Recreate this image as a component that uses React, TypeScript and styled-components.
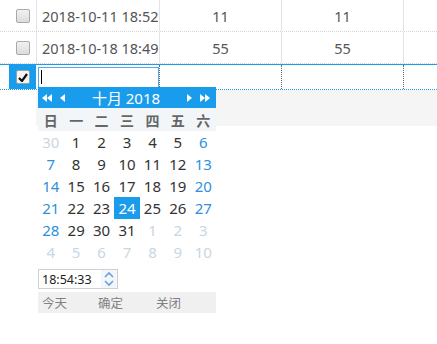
import React from "react";
import styled, { createGlobalStyle } from "styled-components";

const GlobalStyle = createGlobalStyle`
  html, body {
    margin: 0;
    padding: 0;
    background: #fff;
  }
  body {
    font-family: "Noto Sans", "Noto Sans CJK SC", sans-serif;
    color: #555;
  }
`;

const FONT = `"Noto Sans", "Noto Sans CJK SC", sans-serif`;
const BLUE = "#1a9cec";

const Page = styled.div`
  position: relative;
  width: 437px;
  height: 344px;
  overflow: hidden;
`;

const Row = styled.div<{ editing?: boolean }>`
  display: grid;
  grid-template-columns: 9px 27px 123px 122px 122px 1fr;
  height: ${({ editing }) => (editing ? "24px" : "31px")};
  border-top: ${({ editing }) => (editing ? `1px solid ${BLUE}` : "none")};
  border-bottom: ${({ editing }) =>
    editing ? `1px dotted ${BLUE}` : "1px dotted #d6d6d6"};
  font-size: 14.5px;
  color: #555;
`;

const Cell = styled.div<{ center?: boolean; editing?: boolean }>`
  display: flex;
  align-items: center;
  justify-content: ${({ center }) => (center ? "center" : "flex-start")};
  padding-left: ${({ center }) => (center ? "0" : "5px")};
  border-left: ${({ editing }) =>
    editing ? "1px dotted #5a6a7a" : "1px solid #e3e3e3"};
  white-space: nowrap;
  overflow: hidden;
  box-sizing: border-box;
`;

const EditCell = styled.div`
  display: flex;
  align-items: center;
  padding-left: 2px;
  box-sizing: border-box;
`;

const Gutter = styled.div``;

const CheckCell = styled.div<{ selected?: boolean }>`
  display: flex;
  align-items: center;
  justify-content: center;
  background: ${({ selected }) => (selected ? BLUE : "transparent")};
`;

const CheckBox = styled.span<{ checked?: boolean }>`
  width: 12px;
  height: 12px;
  border: 1px solid ${({ checked }) => (checked ? "#8aa" : "#a9a9a9")};
  border-radius: 2px;
  background: ${({ checked }) =>
    checked ? "#f4f4f4" : "linear-gradient(#f2f2f2, #dcdcdc)"};
  display: flex;
  align-items: center;
  justify-content: center;
`;

const EditInput = styled.div`
  width: 121px;
  height: 21px;
  border: 1px solid #5aa7e6;
  box-sizing: border-box;
  display: flex;
  align-items: center;
  padding-left: 2px;
`;

const Caret = styled.span`
  width: 1px;
  height: 14px;
  background: #000;
`;

const GrayBand = styled.div`
  margin-left: 36px;
  height: 36px;
  background: #f5f5f5;
`;

/* date picker popup */
const Picker = styled.div`
  position: absolute;
  left: 38px;
  top: 87px;
  width: 178px;
  background: #fff;
  font-family: ${FONT};
`;

const PickerHead = styled.div`
  height: 21px;
  background: ${BLUE};
  color: #fff;
  display: flex;
  align-items: center;
  justify-content: space-between;
  padding: 0 6px 0 4px;
  font-size: 15px;
`;

const NavGroup = styled.div`
  display: flex;
  align-items: center;
  gap: 8px;
`;

const WeekRow = styled.div`
  display: grid;
  grid-template-columns: repeat(7, 1fr);
  height: 23px;
  background: #f3f6f9;
  align-items: center;
  text-align: center;
  font-size: 14px;
  font-weight: bold;
  color: #666;
`;

const DayGrid = styled.div`
  display: grid;
  grid-template-columns: repeat(7, 1fr);
  grid-auto-rows: 22px;
`;

type Tone = "other" | "weekend" | "normal" | "active";

const Day = styled.div<{ tone: Tone }>`
  display: flex;
  align-items: center;
  justify-content: center;
  font-size: 15px;
  color: ${({ tone }) =>
    tone === "other"
      ? "#c9d6e3"
      : tone === "weekend"
      ? "#2f8fdc"
      : tone === "active"
      ? "#fff"
      : "#333"};
  background: ${({ tone }) => (tone === "active" ? BLUE : "transparent")};
`;

const TimeBox = styled.div`
  margin-top: 6px;
  width: 80px;
  height: 20px;
  border: 1px solid #d0d0d0;
  box-sizing: border-box;
  display: flex;
  align-items: center;
  justify-content: space-between;
  padding-left: 3px;
  font-size: 12.5px;
  color: #222;
`;

const Spinner = styled.div`
  width: 16px;
  height: 18px;
  background: #f3f6fa;
  display: flex;
  align-items: center;
  justify-content: center;
`;

const PickerFoot = styled.div`
  margin-top: 3px;
  height: 21px;
  background: #f0f0f0;
  display: grid;
  grid-template-columns: 56px 58px 1fr;
  align-items: center;
  padding-left: 4px;
  font-size: 12.5px;
  color: #808080;
`;

const NavArrow = ({ dir, double }: { dir: "l" | "r"; double?: boolean }) => {
  const tri = (x: number) =>
    dir === "l"
      ? `M${x + 5} 0 L${x} 4 L${x + 5} 8 Z`
      : `M${x} 0 L${x + 5} 4 L${x} 8 Z`;
  return (
    <svg width={double ? 10 : 5} height={8} viewBox={`0 0 ${double ? 10 : 5} 8`}>
      <path d={tri(0)} fill="#fff" />
      {double && <path d={tri(5)} fill="#fff" />}
    </svg>
  );
};

const rows = [
  { date: "2018-10-11 18:52", a: "11", b: "11" },
  { date: "2018-10-18 18:49", a: "55", b: "55" },
];

const weekNames = ["日", "一", "二", "三", "四", "五", "六"];

const buildDays = () => {
  const days: { n: number; tone: Tone }[] = [];
  days.push({ n: 30, tone: "other" });
  for (let d = 1; d <= 31; d++) {
    const col = days.length % 7;
    days.push({
      n: d,
      tone: d === 24 ? "active" : col === 0 || col === 6 ? "weekend" : "normal",
    });
  }
  let n = 1;
  while (days.length < 42) days.push({ n: n++, tone: "other" });
  return days;
};

export default function App() {
  const days = buildDays();
  return (
    <Page>
      <GlobalStyle />
      {rows.map((r) => (
        <Row key={r.date}>
          <Gutter />
          <CheckCell>
            <CheckBox />
          </CheckCell>
          <Cell>{r.date}</Cell>
          <Cell center>{r.a}</Cell>
          <Cell center>{r.b}</Cell>
          <Cell />
        </Row>
      ))}
      <Row editing>
        <Gutter />
        <CheckCell selected>
          <CheckBox checked>
            <svg width="10" height="9" viewBox="0 0 10 9">
              <path d="M1 5 L4 8 L9 1" stroke="#111" strokeWidth="2.2" fill="none" />
            </svg>
          </CheckBox>
        </CheckCell>
        <EditCell>
          <EditInput>
            <Caret />
          </EditInput>
        </EditCell>
        <Cell editing />
        <Cell editing />
        <Cell editing />
      </Row>
      <GrayBand />

      <Picker>
        <PickerHead>
          <NavGroup>
            <NavArrow dir="l" double />
            <NavArrow dir="l" />
          </NavGroup>
          <span>十月 2018</span>
          <NavGroup>
            <NavArrow dir="r" />
            <NavArrow dir="r" double />
          </NavGroup>
        </PickerHead>
        <WeekRow>
          {weekNames.map((w) => (
            <span key={w}>{w}</span>
          ))}
        </WeekRow>
        <DayGrid>
          {days.map((d, i) => (
            <Day key={i} tone={d.tone}>
              {d.n}
            </Day>
          ))}
        </DayGrid>
        <TimeBox>
          <span>18:54:33</span>
          <Spinner>
            <svg width="10" height="16" viewBox="0 0 10 16">
              <path d="M1 6 L5 2 L9 6" stroke="#6f9fd6" strokeWidth="1.6" fill="none" />
              <path d="M1 10 L5 14 L9 10" stroke="#6f9fd6" strokeWidth="1.6" fill="none" />
            </svg>
          </Spinner>
        </TimeBox>
        <PickerFoot>
          <span>今天</span>
          <span>确定</span>
          <span>关闭</span>
        </PickerFoot>
      </Picker>
    </Page>
  );
}
